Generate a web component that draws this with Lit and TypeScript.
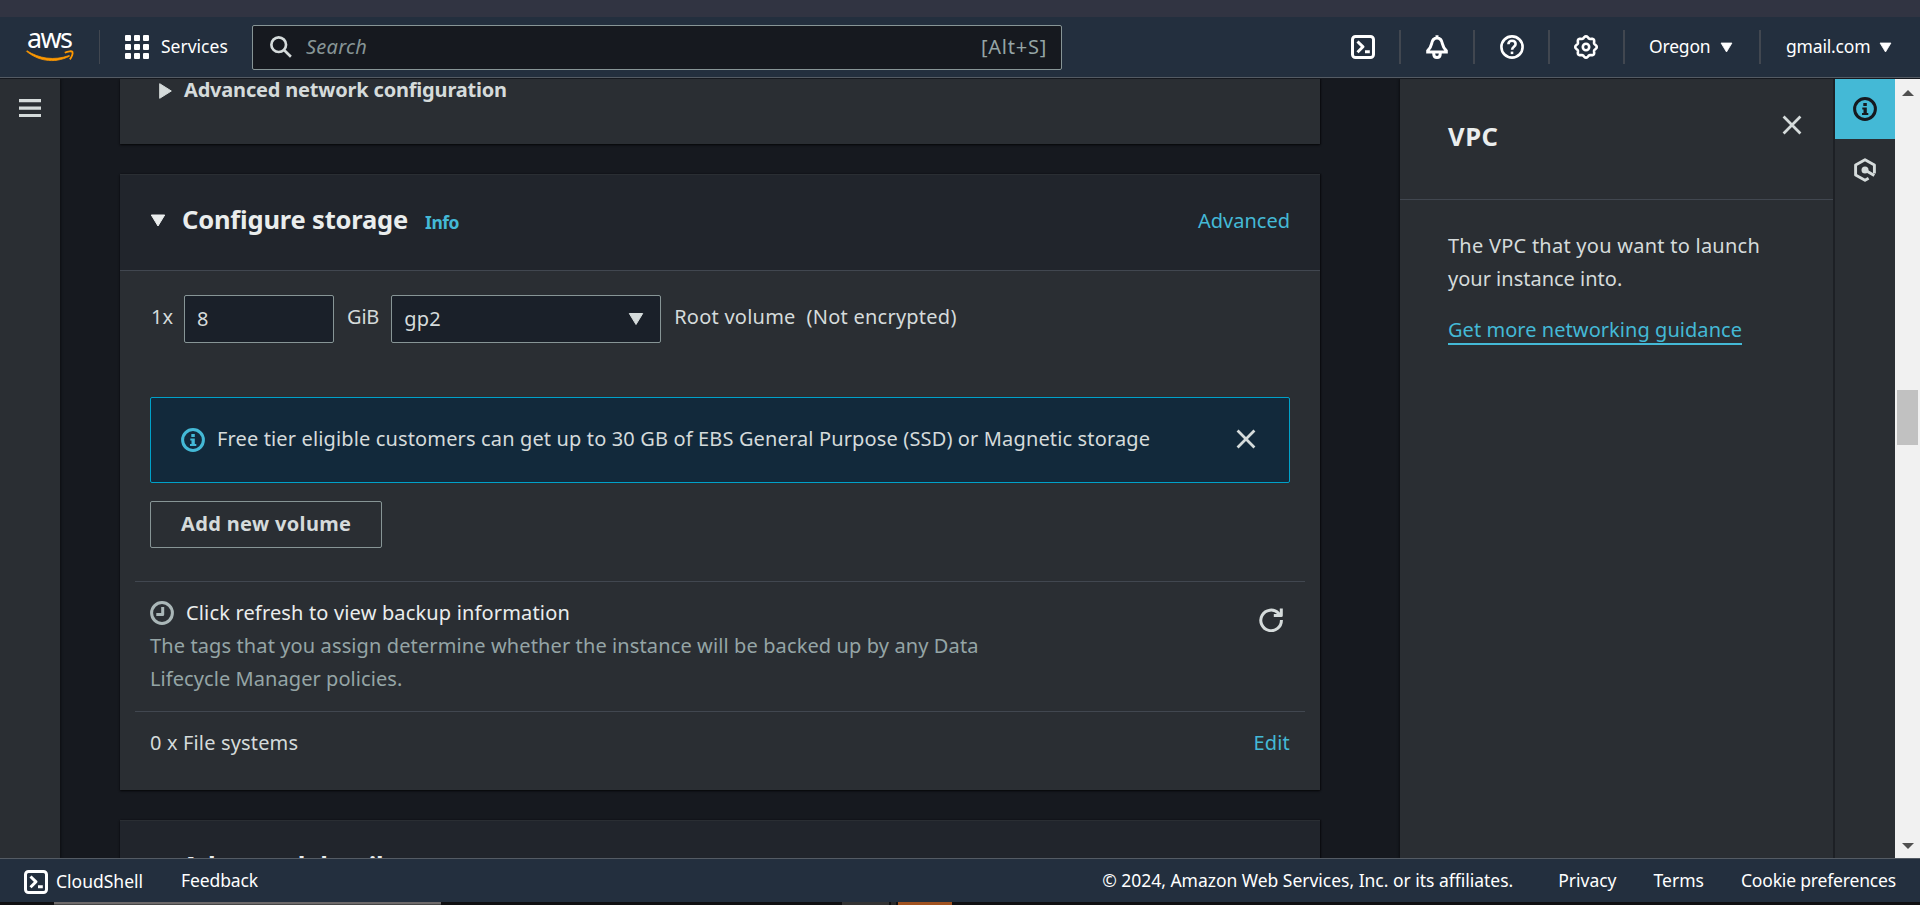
import { LitElement, html, css, svg } from "lit";
import { customElement } from "lit/decorators.js";

const gearPath = (() => {
  const pts: string[] = [];
  for (let i = 0; i < 96; i++) {
    const a = (i / 96) * Math.PI * 2;
    const r = 9.8 + 0.95 * Math.cos(8 * a);
    pts.push(`${(12 + r * Math.sin(a)).toFixed(2)} ${(12 - r * Math.cos(a)).toFixed(2)}`);
  }
  return `M${pts.join("L")}Z`;
})();

const glyphs = {
  shell: svg`<rect x="1.5" y="1.5" width="21" height="21" rx="3"/><path d="M6.5 6.5l5.5 5.3-5.5 5.4M14 16.7h4.8"/>`,
  bell: svg`<path d="M12 0.3v2.5M1.2 16.9h21.6M2.2 16.4C5 13.6 6 12.3 6.6 8.8C7.2 5 9 3 12 3s4.8 2 5.4 5.8C18 12.3 19 13.6 21.8 16.4M8.7 18.500c0 2.600 1.300 4 3.300 4s3.300-1.400 3.300-4"/>`,
  help: svg`<circle cx="12" cy="12" r="10.600"/><path d="M8.400 9.300c0-2.200 1.500-3.500 3.600-3.500s3.600 1.300 3.600 3.200c0 2.700-3.500 2.800-3.500 5.700"/><path d="M12 16.600v2.500"/>`,
  gear: svg`<path d=${gearPath}/><circle cx="12" cy="12" r="3.200"/>`,
  info: svg`<circle cx="12" cy="12" r="10.400"/><path class="solid" d="M10.300 6h3.500v3h-3.500zM9.300 10.500h4.500v5.500h1.500v2h-6.300v-2h1.500v-3.500h-1.200z"/>`,
  close: svg`<path d="M2.800 2.800L21.200 21.200M21.200 2.800L2.800 21.200"/>`,
  clock: svg`<circle cx="12" cy="12" r="10.400"/><path d="M12.700 6v7.500H6.300"/>`,
  refresh: svg`<path d="M22.400 12A10.300 10.300 0 1 1 19.500 5.200l1.700 1.800"/><path d="M22.300 0.500V7.600H14.800"/>`,
  hex: svg`<path d="M21.400 15.500V6.900L12 1.800 2.600 6.900v10.200L12 22.200l3.600-2"/><circle class="solid" cx="12" cy="12" r="3.500"/><path d="M12 12l9.300 5.600"/>`,
  search: svg`<circle cx="9.500" cy="9.500" r="8"/><path d="M15.300 15.300L22.800 22.600"/>`,
};
const icon = (name: keyof typeof glyphs, cls = "") =>
  html`<svg class="icon ${cls}" viewBox="0 0 24 24">${glyphs[name]}</svg>`;
const caret = (cls = "") =>
  html`<svg class="caret ${cls}" viewBox="0 0 16 12"><path d="M1.300 0.500h13.400L8 11.500z"/></svg>`;

@customElement("app-root")
export class AppRoot extends LitElement {
  static styles = css`
    :host { display: flex; flex-direction: column; width: 1920px; height: 905px; overflow: hidden; background: #16191f; color: #d5dbdb; font: 20px/33px "Noto Sans", sans-serif; }
    * { box-sizing: border-box; }
    .icon { display: block; flex: none; width: 24px; height: 24px; fill: none; stroke: currentColor; stroke-width: 3; stroke-linejoin: round; }
    .icon .solid { fill: currentColor; stroke: none; }
    .caret { display: block; flex: none; width: 16px; height: 12px; fill: currentColor; stroke: currentColor; stroke-width: 1; stroke-linejoin: round; }
    .t { white-space: pre; }
    .browser { flex: none; height: 17px; background: #313442; }
    .top { flex: none; display: flex; align-items: center; height: 62px; border-bottom: 1px solid #16191f; box-shadow: inset 0 -1px #545b64; background: #232f3e; color: #fff; font-size: 17.5px; line-height: 24px; padding-bottom: 1px; }
    .logo { width: 48px; height: 32px; margin-left: 26px; overflow: visible; }
    .logo text { font: 27px "Noto Sans", sans-serif; letter-spacing: -1.7px; fill: #fff; }
    .rule { flex: none; width: 1px; height: 34px; background: #414750; }
    .rule.w { width: 2px; }
    .logo + .rule { margin: 0 25px 0 25px; }
    .grid { width: 24px; height: 24px; fill: #fff; }
    .services { margin-left: 12px; width: 80px; padding-bottom: 2px; }
    .search { display: flex; align-items: center; width: 810px; height: 45px; margin-left: 11px; padding: 0 14px 0 17px; background: #16191f; border: 1px solid #879596; border-radius: 2px; font-size: 20px; color: #95a5a6; }
    .search .icon { width: 22px; height: 22px; color: #d5dbdb; stroke-width: 2.900; }
    .search .ph { margin: 0 auto 0 14px; font-style: italic; color: #879596; letter-spacing: 0.23px; }
    .alt { letter-spacing: 0.75px; }
    .tools { display: flex; align-items: center; margin-left: auto; }
    .tools .icon { margin: 0 24px 0 24.5px; }
    .tools .help { stroke-width: 2.600; }
    .tools .gear { stroke-width: 2.600; margin-right: 25px; }
    .tools .caret { width: 13px; height: 11px; }
    .tools .t { letter-spacing: -0.18px; padding-bottom: 2px; }
    .region { display: flex; align-items: center; width: 134px; padding-left: 24px; gap: 9px; }
    .account { display: flex; align-items: center; width: 159px; padding-left: 25px; gap: 9px; }
    .mid { flex: none; display: flex; height: 779px; overflow: hidden; }
    .nav { flex: none; width: 60px; padding: 20px 0 0 19px; background: #2a2e33; box-shadow: 1px 0 2px #0c0e12; }
    .nav svg { display: block; width: 22px; height: 18px; fill: #d5dbdb; }
    .main { flex: none; width: 1340px; padding-left: 60px; overflow: hidden; }
    .card { width: 1200px; background: #2a2e33; box-shadow: 0 1px 2px #050608, 1px 0 1px #0f1116; }
    .net { display: flex; height: 65px; padding-left: 39px; font-weight: 700; }
    .net .caret { width: 13px; height: 16px; margin: 4px 12px 0 0; }
    .net .t { margin-top: -6px; letter-spacing: -0.19px; }
    .card + .card { margin-top: 30px; }
    .store { height: 616px; border-top: 1px solid #2a2e33; }
    .head { display: flex; align-items: flex-start; height: 96px; padding: 26px 30px 0 30px; background: #21252c; border-bottom: 1px solid #414750; line-height: 36px; }
    .head .caret { width: 16px; height: 13px; margin: 13px 16px 0 0; color: #eaeded; }
    .h2 { font-size: 25.500px; font-weight: 700; color: #eaeded; letter-spacing: -0.18px; }
    .info { margin: 3px 0 0 17px; font-size: 17.500px; font-weight: 700; color: #44b9d6; letter-spacing: -0.480px; }
    .link { color: #44b9d6; }
    .head .link { margin: 2px 0 0 auto; }
    .body { padding: 24px 30px 0; }
    .vol { display: flex; height: 48px; line-height: 30px; padding-left: 1px; }
    .vol > .t { margin-top: 7px; }
    .gib { letter-spacing: -0.200px; }
    .gp { letter-spacing: 0.300px; }
    .root { letter-spacing: 0.240px; }
    .field { display: flex; align-items: center; justify-content: space-between; height: 48px; padding: 0 16px 0 12px; background: #1a2029; border: 1px solid #879596; border-radius: 2px; }
    .size { width: 150px; margin: 0 13px 0 11px; }
    .type { width: 270px; margin: 0 13px 0 12px; }
    .note { display: flex; align-items: center; height: 86px; margin-top: 54px; padding: 0 32px 2px 30px; background: #12293b; border: 1px solid #00a1c9; border-radius: 2px; }
    .note .info-i { color: #44b9d6; margin: 2px 12px 0 0; }
    .note .x { width: 22px; height: 22px; margin-left: auto; }
    .free { letter-spacing: 0.140px; padding-bottom: 1px; }
    .add { display: flex; align-items: center; width: 232px; height: 47px; margin-top: 18px; padding: 0 0 3px 30px; border: 1px solid #879596; border-radius: 2px; font-weight: 700; letter-spacing: 0.350px; }
    .hr { height: 1px; margin: 0 -15px; background: #414750; }
    .add + .hr { margin-top: 33px; }
    .backup { display: flex; justify-content: space-between; height: 129px; padding: 14px 7px 0 0; color: #95a5a6; }
    .backup .line { display: flex; color: #eaeded; letter-spacing: 0.160px; }
    .backup .line .icon { margin: 5px 12px 0 0; color: #aab7b8; }
    .backup > .icon { margin-top: 12px; color: #d5dbdb; }
    .tags { letter-spacing: 0.114px; }
    .life { letter-spacing: 0.070px; }
    .fs { display: flex; justify-content: space-between; padding-top: 14px; letter-spacing: 0.150px; }
    .more { height: 60px; border-top: 1px solid #2a2e33; background: #21252c; padding: 26px 0 0 62px; line-height: 36px; }
    .help-panel { flex: none; width: 435px; background: #2a2e33; border-right: 2px solid #1d2025; box-shadow: -1px 0 2px #0c0e12; }
    .ph-head { display: flex; justify-content: space-between; height: 121px; padding: 35px 30px 0 48px; border-bottom: 1px solid #414750; }
    .ph-head .h2 { line-height: 44px; letter-spacing: 0.600px; }
    .ph-head .icon { width: 22px; height: 22px; }
    .ph-body { padding: 29px 0 0 48px; }
    .l1 { letter-spacing: 0.250px; }
    .guide { display: inline-block; height: 32px; margin-top: 18px; border-bottom: 2px solid #44b9d6; letter-spacing: 0.050px; }
    .strip { flex: none; width: 60px; background: #2a2e33; }
    .tile { display: flex; justify-content: center; height: 60px; padding-top: 18px; background: #44b9d6; color: #16191f; }
    .strip .hex { margin: 19px auto 0; stroke-width: 2.900; }
    .bar { flex: none; display: flex; flex-direction: column; align-items: center; width: 25px; padding: 11px 0 9px; background: #f1f1f1; }
    .bar svg { display: block; width: 12px; height: 6px; fill: #505050; }
    .thumb { width: 21px; height: 55px; margin: 294px 0 auto; background: #c1c1c1; }
    .foot { flex: none; display: flex; align-items: center; height: 44px; padding: 0 24px 1px; background: #232f3e; border-top: 1px solid #545b64; color: #fff; font-size: 17.500px; line-height: 24px; }
    .foot .shell { margin: 4px 8px 0 0; }
    .cs { margin-top: 2px; }
    .fb { margin-left: 38px; letter-spacing: -0.120px; }
    .copy { margin-left: auto; letter-spacing: -0.020px; }
    .foot .p { margin-left: 45px; }
    .foot .tm { margin-left: 37px; }
    .foot .ck { margin-left: 37px; letter-spacing: -0.170px; }
    .task { flex: none; display: flex; height: 3px; background: #101012; }
    .task i { display: block; height: 3px; }
    .a { width: 387px; margin-left: 54px; background: #464646; border-top: 2px solid #6e6a6a; }
    .b { width: 47px; margin-left: 401px; background: #333; }
    .c { width: 5px; margin-left: 2px; background: #2a2a2a; }
    .d { width: 54px; margin-left: 2px; background: #a0521f; }
  `;

  render() {
    return html`
      <div class="browser"></div>
      <header class="top">
        <svg class="logo" viewBox="0 0 48 32">
          <text x="1" y="16.500">aws</text>
          <path d="M0.500 20.300C11 29 27 33.500 43.500 25.200L43.200 24.500C28 30 13 27.500 1 19.800Z" fill="#ff9900" stroke="#ff9900" stroke-width="0.800"/>
          <path d="M38.800 21.800C42 19.800 46 20 46.500 21C47 22.300 46 26 43.800 28.300" fill="none" stroke="#ff9900" stroke-width="1.800"/>
        </svg>
        <i class="rule"></i>
        <svg class="grid" viewBox="0 0 24 24">${[0, 9, 18].map((y) => [0, 9, 18].map((x) => svg`<rect x=${x} y=${y} width="6" height="6" rx="1"/>`))}</svg>
        <span class="t services">Services</span>
        <div class="search">${icon("search")}<span class="t ph">Search</span><span class="t alt">[Alt+S]</span></div>
        <div class="tools">
          ${icon("shell")}<i class="rule w"></i>${icon("bell")}<i class="rule w"></i>${icon("help", "help")}<i class="rule w"></i>${icon("gear", "gear")}<i class="rule w"></i>
          <span class="region"><span class="t">Oregon</span>${caret()}</span><i class="rule w"></i>
          <span class="account"><span class="t">gmail.com</span>${caret()}</span>
        </div>
      </header>
      <div class="mid">
        <nav class="nav"><svg viewBox="0 0 22 18"><path d="M0 0h22v3.200H0zM0 7.500h22v3.200H0zM0 14.900h22v3.100H0z"/></svg></nav>
        <main class="main">
          <section class="card net">
            <svg class="caret" viewBox="0 0 13 16"><path d="M0.700 0.700v14.600L12.300 8z"/></svg>
            <span class="t">Advanced network configuration</span>
          </section>
          <section class="card store">
            <div class="head">${caret()}<span class="t h2">Configure storage</span><span class="t info">Info</span><span class="t link">Advanced</span></div>
            <div class="body">
              <div class="vol"><span class="t">1x</span><div class="field size"><span class="t">8</span></div><span class="t gib">GiB</span><div class="field type"><span class="t gp">gp2</span>${caret()}</div><span class="t root">Root volume  (Not encrypted)</span></div>
              <div class="note">${icon("info", "info-i")}<span class="t free">Free tier eligible customers can get up to 30 GB of EBS General Purpose (SSD) or Magnetic storage</span>${icon("close", "x")}</div>
              <div class="add"><span class="t">Add new volume</span></div>
              <div class="hr"></div>
              <div class="backup">
                <div>
                  <div class="line">${icon("clock")}<span class="t">Click refresh to view backup information</span></div>
                  <span class="t tags">The tags that you assign determine whether the instance will be backed up by any Data</span><br>
                  <span class="t life">Lifecycle Manager policies.</span>
                </div>
                ${icon("refresh")}
              </div>
              <div class="hr"></div>
              <div class="fs"><span class="t">0 x File systems</span><span class="t link">Edit</span></div>
            </div>
          </section>
          <section class="card more"><span class="t h2">Advanced details</span></section>
        </main>
        <aside class="help-panel">
          <div class="ph-head"><span class="t h2">VPC</span>${icon("close", "x")}</div>
          <div class="ph-body">
            <span class="t l1">The VPC that you want to launch</span><br>
            <span class="t">your instance into.</span><br>
            <span class="t link guide">Get more networking guidance</span>
          </div>
        </aside>
        <div class="strip"><div class="tile">${icon("info")}</div>${icon("hex", "hex")}</div>
        <div class="bar"><svg viewBox="0 0 12 6"><path d="M0 6L6 0l6 6z"/></svg><div class="thumb"></div><svg viewBox="0 0 12 6"><path d="M0 0h12L6 6z"/></svg></div>
      </div>
      <footer class="foot">${icon("shell", "shell")}<span class="t cs">CloudShell</span><span class="t fb">Feedback</span><span class="t copy">© 2024, Amazon Web Services, Inc. or its affiliates.</span><span class="t p">Privacy</span><span class="t tm">Terms</span><span class="t ck">Cookie preferences</span></footer>
      <div class="task"><i class="a"></i><i class="b"></i><i class="c"></i><i class="d"></i></div>
    `;
  }
}
